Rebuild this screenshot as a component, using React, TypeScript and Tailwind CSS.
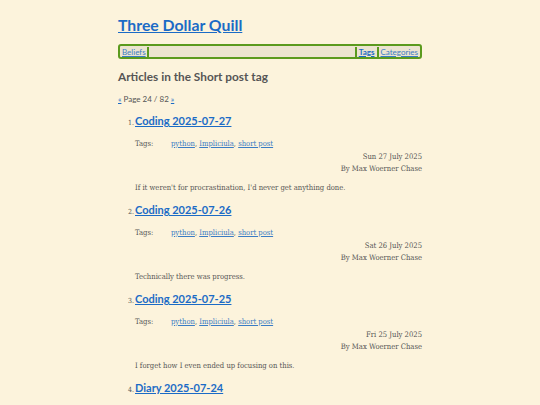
const posts = [
  {
    n: 1,
    title: 'Coding 2025-07-27',
    date: 'Sun 27 July 2025',
    summary: "If it weren't for procrastination, I'd never get anything done.",
  },
  {
    n: 2,
    title: 'Coding 2025-07-26',
    date: 'Sat 26 July 2025',
    summary: 'Technically there was progress.',
  },
  {
    n: 3,
    title: 'Coding 2025-07-25',
    date: 'Fri 25 July 2025',
    summary: 'I forget how I even ended up focusing on this.',
  },
  {
    n: 4,
    title: 'Diary 2025-07-24',
    date: 'Thu 24 July 2025',
    summary: '',
  },
]

const sans = "font-['Lato',sans-serif]"
const serif = "font-['DejaVu_Serif_Condensed','DejaVu_Serif',serif]"

export default function App() {
  return (
    <div className="h-[405px] overflow-hidden bg-[#fcf3dc] text-[#555]">
      <div className="mx-auto w-[304px] pt-[13px]">
        <h1 className={`${sans} text-[15.8px] font-bold leading-[24px]`}>
          <a href="#" className="text-[#1b6bc6] underline">
            Three Dollar Quill
          </a>
        </h1>

        <nav
          className={`${sans} mt-[7px] flex h-[15px] items-center rounded-[3px] border-2 border-[#5b9a1e] bg-[#ece4d0] px-[2px] text-[8px] leading-[10px]`}
        >
          <a href="#" className="text-[#3a7cc4] underline">
            Beliefs
          </a>
          <span className="ml-[1px] h-[10px] w-[2px] bg-[#5b9a1e]" />
          <span className="flex-1" />
          <span className="h-[10px] w-[2px] bg-[#5b9a1e]" />
          <a href="#" className="mx-[2px] font-bold text-[#1b6bc6] underline">
            Tags
          </a>
          <span className="h-[10px] w-[2px] bg-[#5b9a1e]" />
          <a href="#" className="ml-[2px] text-[#3a7cc4] underline">
            Categories
          </a>
        </nav>

        <h2 className={`${sans} mt-[9px] text-[11.8px] font-bold leading-[18px] text-[#555]`}>
          Articles in the Short post tag
        </h2>

        <p className={`${sans} mt-[8px] text-[8px] leading-[10px]`}>
          <a href="#" className="text-[#1b6bc6] underline">«</a> Page 24 / 82{' '}
          <a href="#" className="text-[#1b6bc6] underline">»</a>
        </p>

        <ol className="mt-[8px]">
          {posts.map((p) => (
            <li key={p.n} className="flex h-[89px] items-baseline">
              <span className={`${serif} w-[16px] text-right text-[7px]`}>{p.n}.</span>
              <div className="flex-1 pl-[1px]">
                <h3 className={`${sans} text-[11px] font-bold leading-[18px]`}>
                  <a href="#" className="text-[#1b6bc6] underline">
                    {p.title}
                  </a>
                </h3>
                <div className={`${serif} text-[7.6px] leading-[12px]`}>
                  <div className="mt-[8px] flex">
                    <span className="w-[36px]">Tags:</span>
                    <span>
                      <a href="#" className="text-[#3a7cc4] underline">python</a>,{' '}
                      <a href="#" className="text-[#3a7cc4] underline">Impliciula</a>,{' '}
                      <a href="#" className="text-[#3a7cc4] underline">short post</a>
                    </span>
                  </div>
                  <div className="mt-[1px] text-right">{p.date}</div>
                  <div className="text-right">By Max Woerner Chase</div>
                  <p className="mt-[7px]">{p.summary}</p>
                </div>
              </div>
            </li>
          ))}
        </ol>
      </div>
    </div>
  )
}
